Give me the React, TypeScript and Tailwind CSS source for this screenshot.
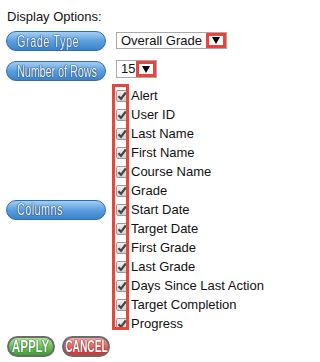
import type { ReactNode } from 'react';

const columns = [
  'Alert',
  'User ID',
  'Last Name',
  'First Name',
  'Course Name',
  'Grade',
  'Start Date',
  'Target Date',
  'First Grade',
  'Last Grade',
  'Days Since Last Action',
  'Target Completion',
  'Progress',
];

function Pill({ children, spacing }: { children: ReactNode; spacing: string }) {
  return (
    <div className="flex h-[20px] w-[100px] shrink-0 items-center whitespace-nowrap rounded-full border border-[#2f6eab] bg-gradient-to-b from-[#a3cff2] via-[#5b9fdf] to-[#3a83c9] pl-[10px] font-['Liberation_Sans',Arial,sans-serif] text-[17px] leading-none text-white [text-shadow:0_0_1px_#1a4c82,0_0_1px_#1a4c82,0_0_1px_#1a4c82,0_0_1px_#1a4c82]">
      <span className={`inline-block origin-left scale-x-[0.63] ${spacing}`}>{children}</span>
    </div>
  );
}

function Arrow() {
  return (
    <span className="flex h-full w-[20px] shrink-0 items-center justify-center border-[3px] border-[#e8453c] bg-white">
      <svg width="8" height="7" viewBox="0 0 8 7">
        <polygon points="0,0 8,0 4,7" fill="#000" />
      </svg>
    </span>
  );
}

function Check() {
  return (
    <span className="flex h-[12px] w-[12px] shrink-0 items-center justify-center rounded-[2px] border border-[#9a9a9a] bg-gradient-to-b from-[#f0f0f0] to-[#d0d0d0]">
      <svg width="10" height="10" viewBox="0 0 10 10">
        <path d="M1.5 5.2 L4 7.8 L8.8 1.5" fill="none" stroke="#444" strokeWidth="2.2" />
      </svg>
    </span>
  );
}

function ActionButton({ label, tone }: { label: string; tone: 'green' | 'red' }) {
  const colours =
    tone === 'green'
      ? 'from-[#b4e79a] via-[#6cc25a] to-[#3e9f37] [text-shadow:0_0_1px_#1f5a1a,0_0_1px_#1f5a1a,0_0_1px_#1f5a1a]'
      : 'from-[#f9a7a7] via-[#e56565] to-[#c93535] [text-shadow:0_0_1px_#7a1717,0_0_1px_#7a1717,0_0_1px_#7a1717]';
  const squeeze = tone === 'green' ? 'scale-x-[0.68]' : 'scale-x-[0.6]';
  return (
    <div
      className={`flex h-[21px] w-[48px] items-center justify-center whitespace-nowrap rounded-full border-2 border-[#6b6b6b] bg-gradient-to-b ${colours} font-['Liberation_Sans',Arial,sans-serif] text-[17px] font-bold leading-none text-white`}
    >
      <span className={`inline-block ${squeeze}`}>{label}</span>
    </div>
  );
}

export default function App() {
  return (
    <div className="flex h-[362px] w-[266px] flex-col bg-white pl-[6px] pt-[9px] font-['Liberation_Sans',Arial,sans-serif] text-[13px] text-[#111]">
      <div className="pl-[1px] leading-[15px]">Display Options:</div>

      {/* Grade type */}
      <div className="mt-[7px] flex items-start gap-[10px]">
        <Pill spacing="tracking-[1px]">Grade Type</Pill>
        <div className="mt-[1px] flex h-[17px] w-[111px] items-stretch border border-[#a9a9a9] bg-white">
          <span className="flex-1 pl-[4px] leading-[15px]">Overall Grade</span>
          <Arrow />
        </div>
      </div>

      {/* Rows */}
      <div className="mt-[10px] flex items-start gap-[10px]">
        <Pill spacing="tracking-[0px]">Number of Rows</Pill>
        <div className="-mt-[1px] flex h-[18px] w-[41px] items-stretch border border-[#a9a9a9] bg-white">
          <span className="flex-1 pl-[4px] leading-[16px]">15</span>
          <Arrow />
        </div>
      </div>

      {/* Columns */}
      <div className="mt-[5px] flex items-center gap-[10px]">
        <Pill spacing="tracking-[0.8px]">Columns</Pill>
        <div className="relative flex flex-col">
          {columns.map((c) => (
            <div key={c} className="flex h-[19px] items-center gap-[3px] whitespace-nowrap">
              <Check />
              <span className="leading-[15px]">{c}</span>
            </div>
          ))}
          <span className="pointer-events-none absolute -left-[4px] -top-[2px] bottom-[3px] w-[17px] border-[3px] border-[#e8453c]" />
        </div>
      </div>

      <div className="mt-[3px] flex gap-[7px] pl-[1px]">
        <ActionButton label="APPLY" tone="green" />
        <ActionButton label="CANCEL" tone="red" />
      </div>
    </div>
  );
}
